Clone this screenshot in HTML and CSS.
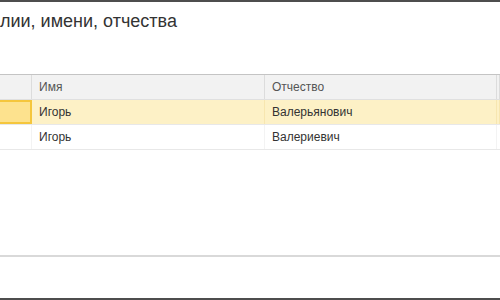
FILE: index.html
```html
<!DOCTYPE html>
<html lang="ru">
  <head>
    <meta charset="UTF-8" />
    <title>Подбор по ФИО</title>
    <link rel="stylesheet" href="styles.css">
  </head>
  <body>
    <div id="window">
      <h2 class="title">лии, имени, отчества</h2>
      <div class="grid">
        <div class="row head">
          <div class="cell c0"></div>
          <div class="cell c1">Имя</div>
          <div class="cell c2">Отчество</div>
          <div class="cell c3"></div>
        </div>
        <div class="row selected">
          <div class="cell c0 current"></div>
          <div class="cell c1">Игорь</div>
          <div class="cell c2">Валерьянович</div>
          <div class="cell c3"></div>
        </div>
        <div class="row">
          <div class="cell c0"></div>
          <div class="cell c1">Игорь</div>
          <div class="cell c2">Валериевич</div>
          <div class="cell c3"></div>
        </div>
      </div>
      <div class="footer"></div>
    </div>
  </body>
</html>
```

FILE: styles.css
```css
body {
  margin: 0;
  font-family: "Liberation Sans", Arial, sans-serif;
  background-color: white;
}
#window {
  height: 296px;
  border-top: 2px solid #4d4d4d;
  border-bottom: 2px solid #4d4d4d;
  display: flex;
  flex-direction: column;
}
.title {
  margin: 0;
  padding: 9px 0 0 0;
  height: 63px;
  font-size: 18px;
  font-weight: normal;
  color: #333;
}
.grid {
  flex: 1;
  border-top: 1px solid #c4c4c4;
  border-bottom: 2px solid #d9d9d9;
}
.row {
  display: flex;
  height: 24px;
  border-bottom: 1px solid #e8e8e8;
  font-size: 12px;
  color: #333;
}
.row.head {
  background-color: #f2f2f2;
  color: #555;
  border-bottom: 1px solid #e0e0e0;
}
.row.selected {
  background-color: #fdf1c6;
}
.cell {
  flex-shrink: 0;
  box-sizing: border-box;
  padding: 0 7px;
  line-height: 24px;
  border-right: 1px solid #f3f3f3;
  white-space: nowrap;
}
.head .cell {
  border-right: 1px solid #dcdcdc;
}
.selected .cell {
  border-right: 1px solid #f7e6b0;
}
.c0 { width: 32px; }
.c1 { width: 233px; }
.c2 { width: 232px; }
.c3 { flex: 1; padding: 0; border-right: none; }
.selected .cell.current {
  background-color: #fde28e;
  border: 2px solid #f5c63c;
  border-left: none;
}
.footer {
  height: 41px;
}
```
